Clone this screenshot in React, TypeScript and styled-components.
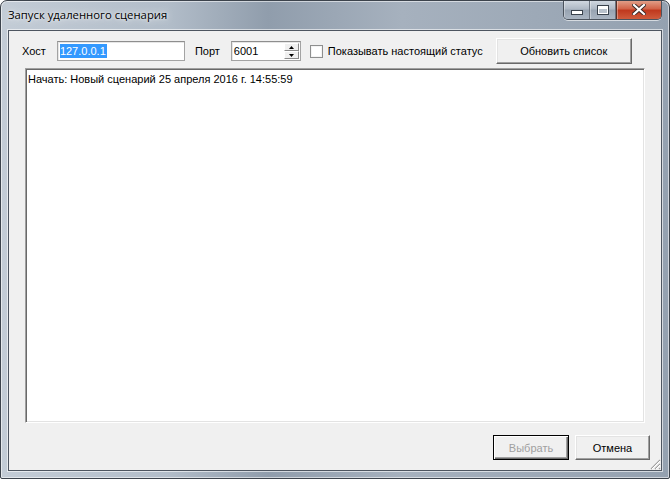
import React from "react";
import styled, { createGlobalStyle } from "styled-components";

const Global = createGlobalStyle`
  html, body { margin: 0; padding: 0; background: #ffffff; }
  body { width: 670px; height: 479px; overflow: hidden; }
  * { box-sizing: border-box; }
`;

const Window = styled.div`
  width: 670px;
  height: 479px;
  display: flex;
  flex-direction: column;
  padding: 0 7px 7px 7px;
  border: 1px solid #3c434c;
  border-radius: 7px 7px 2px 2px;
  background: linear-gradient(90deg, #c3ccd6 0%, #b2bdc9 25%, #909dac 40%, #a6b1be 60%, #94a1b0 100%);
  box-shadow: inset 0 0 0 1px rgba(255, 255, 255, 0.55);
  position: relative;
  overflow: hidden;
`;

const TitleBar = styled.div`
  height: 29px;
  display: flex;
  align-items: flex-start;
  justify-content: space-between;
`;

const Title = styled.div`
  font-family: "Open Sans", "Noto Sans", sans-serif;
  font-size: 11.3px;
  color: #000;
  padding-top: 6px;
  text-shadow: 0 0 8px rgba(255, 255, 255, 0.9), 0 0 3px rgba(255, 255, 255, 0.9);
`;

const Caption = styled.div`
  display: flex;
  margin-top: -1px;
  border: 1px solid #4b535d;
  border-top: none;
  border-radius: 0 0 5px 5px;
  overflow: hidden;
  box-shadow: 0 1px 0 rgba(255, 255, 255, 0.6);
`;

const CapBtn = styled.div<{ $w: number; $close?: boolean }>`
  width: ${(p) => p.$w}px;
  height: 19px;
  display: flex;
  align-items: center;
  justify-content: center;
  border-left: ${(p) => (p.$close ? "1px solid #5a3028" : "none")};
  border-right: ${(p) => (p.$close ? "none" : "1px solid #6b7480")};
  background: ${(p) =>
    p.$close
      ? "linear-gradient(180deg, #e3a58f 0%, #d2654a 45%, #c0391e 55%, #cf5b3c 100%)"
      : "linear-gradient(180deg, #d4dbe3 0%, #b0bac6 45%, #98a4b2 55%, #aab5c2 100%)"};
  box-shadow: inset 0 1px 0 rgba(255, 255, 255, 0.5), inset 1px 0 0 rgba(255, 255, 255, 0.35);
`;

const MinGlyph = styled.div`
  width: 12px;
  height: 5px;
  margin-top: 6px;
  background: #fff;
  border: 1px solid #39424c;
`;

const MaxGlyph = styled.div`
  width: 12px;
  height: 10px;
  background: #b9c2cc;
  border: 1px solid #39424c;
  box-shadow: inset 0 0 0 1px #fff, inset 0 2px 0 1px #fff;
`;

const Client = styled.div`
  flex: 1;
  background: #f0f0f0;
  border: 1px solid #4d5560;
  box-shadow: 0 0 0 1px rgba(255, 255, 255, 0.6);
  display: flex;
  flex-direction: column;
  font-family: "Liberation Sans", Arial, sans-serif;
  font-size: 11px;
  color: #000;
  position: relative;
`;

const TopRow = styled.div`
  display: flex;
  align-items: center;
  height: 26px;
  margin-top: 7px;
  padding-left: 13px;
`;

const Label = styled.span<{ $ml?: number }>`
  margin-left: ${(p) => p.$ml ?? 0}px;
  white-space: nowrap;
`;

const TextBox = styled.div<{ $w: number; $ml: number }>`
  width: ${(p) => p.$w}px;
  height: 20px;
  margin-left: ${(p) => p.$ml}px;
  background: #fff;
  border: 1px solid #a3a3a3;
  border-top-color: #8e8e8e;
  box-shadow: inset 1px 1px 0 #e6e6e6;
  display: flex;
  align-items: center;
  padding-left: 2px;
  position: relative;
`;

const Selected = styled.span`
  background: #3399ff;
  color: #fff;
  line-height: 14px;
  padding: 0 1px 0 0;
`;

const SpinCol = styled.div`
  position: absolute;
  right: 1px;
  top: 1px;
  bottom: 1px;
  width: 15px;
  display: flex;
  flex-direction: column;
`;

const SpinBtn = styled.div`
  flex: 1;
  display: flex;
  align-items: center;
  justify-content: center;
  background: #f0f0f0;
  border-top: 1px solid #fff;
  border-left: 1px solid #fff;
  border-right: 1px solid #8a8a8a;
  border-bottom: 1px solid #8a8a8a;
`;

const Check = styled.div`
  width: 13px;
  height: 13px;
  margin-left: 9px;
  background: #fff;
  border: 1px solid #8e8f8f;
  box-shadow: inset 0 0 0 1px #f4f4f4;
`;

const Button = styled.div<{ $w: number; $h: number; $ml?: number; $default?: boolean; $disabled?: boolean }>`
  width: ${(p) => p.$w}px;
  height: ${(p) => p.$h}px;
  margin-left: ${(p) => p.$ml ?? 0}px;
  display: flex;
  align-items: center;
  justify-content: center;
  background: #f0f0f0;
  color: ${(p) => (p.$disabled ? "#a0a0a0" : "#000")};
  border: 1px solid;
  border-color: ${(p) => (p.$default ? "#000" : "#ffffff #696969 #696969 #ffffff")};
  box-shadow: ${(p) =>
    p.$default
      ? "inset 1px 1px 0 #fff, inset -1px -1px 0 #696969, inset -2px -2px 0 #a0a0a0"
      : "inset -1px -1px 0 #a0a0a0, inset 1px 1px 0 #e3e3e3"};
  white-space: nowrap;
`;

const ListBox = styled.div`
  margin: 4px 16px 0 16px;
  height: 355px;
  background: #fff;
  border: 1px solid;
  border-color: #a0a0a0 #ffffff #ffffff #a0a0a0;
  box-shadow: inset 1px 1px 0 #696969, inset -1px -1px 0 #e3e3e3;
  padding: 3px 0 0 2px;
`;

const ListItem = styled.div`
  line-height: 14px;
`;

const BottomRow = styled.div`
  display: flex;
  justify-content: flex-end;
  margin-top: 12px;
  padding-right: 11px;
  gap: 6px;
`;

const Grip = styled.svg`
  position: absolute;
  right: 0;
  bottom: 0;
`;

export default function App() {
  return (
    <>
      <Global />
      <Window>
        <TitleBar>
          <Title>Запуск удаленного сценария</Title>
          <Caption>
            <CapBtn $w={26}>
              <MinGlyph />
            </CapBtn>
            <CapBtn $w={26}>
              <MaxGlyph />
            </CapBtn>
            <CapBtn $w={45} $close>
              <svg width="14" height="11" viewBox="0 0 14 11">
                <path d="M2 1 L12 10 M12 1 L2 10" stroke="#3a2a28" strokeWidth="4" strokeLinecap="square" />
                <path d="M2 1 L12 10 M12 1 L2 10" stroke="#ffffff" strokeWidth="2.2" strokeLinecap="square" />
              </svg>
            </CapBtn>
          </Caption>
        </TitleBar>
        <Client>
          <TopRow>
            <Label>Хост</Label>
            <TextBox $w={128} $ml={11}>
              <Selected>127.0.0.1</Selected>
            </TextBox>
            <Label $ml={10}>Порт</Label>
            <TextBox $w={70} $ml={11}>
              6001
              <SpinCol>
                <SpinBtn>
                  <svg width="5" height="3" viewBox="0 0 5 3">
                    <path d="M2.5 0 L5 3 L0 3 Z" fill="#000" />
                  </svg>
                </SpinBtn>
                <SpinBtn>
                  <svg width="5" height="3" viewBox="0 0 5 3">
                    <path d="M0 0 L5 0 L2.5 3 Z" fill="#000" />
                  </svg>
                </SpinBtn>
              </SpinCol>
            </TextBox>
            <Check />
            <Label $ml={5}>Показывать настоящий статус</Label>
            <Button $w={136} $h={26} $ml={13}>
              Обновить список
            </Button>
          </TopRow>
          <ListBox>
            <ListItem>Начать: Новый сценарий 25 апреля 2016 г. 14:55:59</ListItem>
          </ListBox>
          <BottomRow>
            <Button $w={76} $h={25} $default $disabled>
              Выбрать
            </Button>
            <Button $w={75} $h={25}>
              Отмена
            </Button>
          </BottomRow>
          <Grip width="12" height="12" viewBox="0 0 12 12">
            <path d="M11 2 L2 11 M11 6 L6 11 M11 10 L10 11" stroke="#a0a0a0" strokeWidth="1.2" />
            <path d="M11 3 L3 11 M11 7 L7 11" stroke="#ffffff" strokeWidth="1" />
          </Grip>
        </Client>
      </Window>
    </>
  );
}
